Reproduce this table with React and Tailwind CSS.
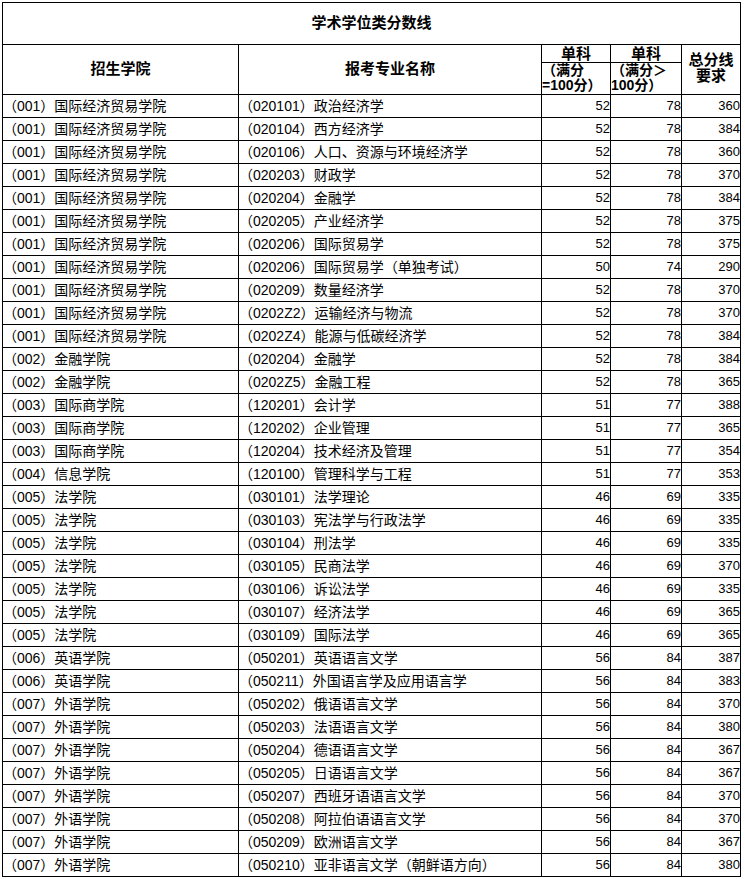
import React from "react";

const rows = [
  ["（001）国际经济贸易学院", "（020101）政治经济学", 52, 78, 360],
  ["（001）国际经济贸易学院", "（020104）西方经济学", 52, 78, 384],
  ["（001）国际经济贸易学院", "（020106）人口、资源与环境经济学", 52, 78, 360],
  ["（001）国际经济贸易学院", "（020203）财政学", 52, 78, 370],
  ["（001）国际经济贸易学院", "（020204）金融学", 52, 78, 384],
  ["（001）国际经济贸易学院", "（020205）产业经济学", 52, 78, 375],
  ["（001）国际经济贸易学院", "（020206）国际贸易学", 52, 78, 375],
  ["（001）国际经济贸易学院", "（020206）国际贸易学（单独考试）", 50, 74, 290],
  ["（001）国际经济贸易学院", "（020209）数量经济学", 52, 78, 370],
  ["（001）国际经济贸易学院", "（0202Z2）运输经济与物流", 52, 78, 370],
  ["（001）国际经济贸易学院", "（0202Z4）能源与低碳经济学", 52, 78, 384],
  ["（002）金融学院", "（020204）金融学", 52, 78, 384],
  ["（002）金融学院", "（0202Z5）金融工程", 52, 78, 365],
  ["（003）国际商学院", "（120201）会计学", 51, 77, 388],
  ["（003）国际商学院", "（120202）企业管理", 51, 77, 365],
  ["（003）国际商学院", "（120204）技术经济及管理", 51, 77, 354],
  ["（004）信息学院", "（120100）管理科学与工程", 51, 77, 353],
  ["（005）法学院", "（030101）法学理论", 46, 69, 335],
  ["（005）法学院", "（030103）宪法学与行政法学", 46, 69, 335],
  ["（005）法学院", "（030104）刑法学", 46, 69, 335],
  ["（005）法学院", "（030105）民商法学", 46, 69, 370],
  ["（005）法学院", "（030106）诉讼法学", 46, 69, 335],
  ["（005）法学院", "（030107）经济法学", 46, 69, 365],
  ["（005）法学院", "（030109）国际法学", 46, 69, 365],
  ["（006）英语学院", "（050201）英语语言文学", 56, 84, 387],
  ["（006）英语学院", "（050211）外国语言学及应用语言学", 56, 84, 383],
  ["（007）外语学院", "（050202）俄语语言文学", 56, 84, 370],
  ["（007）外语学院", "（050203）法语语言文学", 56, 84, 380],
  ["（007）外语学院", "（050204）德语语言文学", 56, 84, 367],
  ["（007）外语学院", "（050205）日语语言文学", 56, 84, 367],
  ["（007）外语学院", "（050207）西班牙语语言文学", 56, 84, 370],
  ["（007）外语学院", "（050208）阿拉伯语语言文学", 56, 84, 370],
  ["（007）外语学院", "（050209）欧洲语言文学", 56, 84, 367],
  ["（007）外语学院", "（050210）亚非语言文学（朝鲜语方向）", 56, 84, 380],
];

const cols = "grid grid-cols-[236px_303px_69px_71px_59px]";
const cell = "border-r border-b border-black";

export default function App() {
  return (
    <div
      className="bg-white text-black min-h-[879px] pt-[2px] pl-[2px]"
      style={{ fontFamily: '"Liberation Sans", "Noto Sans CJK SC", sans-serif' }}
    >
      <div className="w-[739px] border-l border-t border-black">
        <div className={`${cell} h-[42px] flex items-center justify-center text-[15px] font-bold`}>
          学术学位类分数线
        </div>
        <div className={`${cols} grid-rows-[18px_32px] text-[15px] font-bold`}>
          <div className={`${cell} row-span-2 flex items-center justify-center`}>招生学院</div>
          <div className={`${cell} row-span-2 flex items-center justify-center`}>报考专业名称</div>
          <div className={`${cell} flex items-center justify-center leading-[16px]`}>单科</div>
          <div className={`${cell} flex items-center justify-center leading-[16px]`}>单科</div>
          <div className={`${cell} row-span-2 col-start-5 row-start-1 flex flex-col items-center justify-center leading-[16px] pb-[4px]`}>
            <span>总分线</span>
            <span>要求</span>
          </div>
          <div className={`${cell} col-start-3 row-start-2 flex flex-col text-[14px] leading-[15px] whitespace-nowrap`}>
            <span>（满分</span>
            <span>=100分）</span>
          </div>
          <div className={`${cell} col-start-4 row-start-2 flex flex-col text-[14px] leading-[15px] whitespace-nowrap`}>
            <span>（满分＞</span>
            <span>100分）</span>
          </div>
        </div>
        {rows.map((r, i) => (
          <div key={i} className={`${cols} h-[23px] text-[14px]`}>
            <div className={`${cell} flex items-center whitespace-nowrap`}>{r[0]}</div>
            <div className={`${cell} flex items-center whitespace-nowrap`}>{r[1]}</div>
            <div className={`${cell} flex items-center justify-end text-[13px]`}>{r[2]}</div>
            <div className={`${cell} flex items-center justify-end text-[13px]`}>{r[3]}</div>
            <div className={`${cell} flex items-center justify-end text-[13px]`}>{r[4]}</div>
          </div>
        ))}
      </div>
    </div>
  );
}
